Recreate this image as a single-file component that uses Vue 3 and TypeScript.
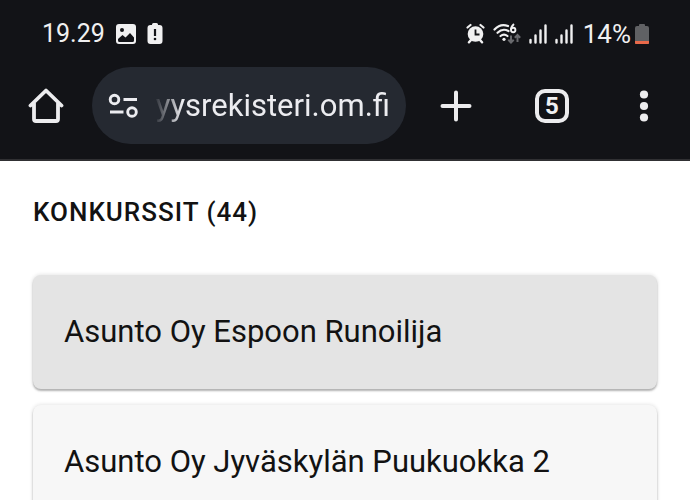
<script setup lang="ts">
import { ref } from 'vue'

interface Bankruptcy {
  name: string
  active: boolean
}

const time = '19.29'
const battery = '14%'
const tabCount = 5
const total = 44
const address = ref('myysrekisteri.om.fi')

const bankruptcies: Bankruptcy[] = [
  { name: 'Asunto Oy Espoon Runoilija', active: true },
  { name: 'Asunto Oy Jyväskylän Puukuokka 2', active: false },
]
</script>

<template>
  <div class="screen">
    <header class="chrome">
      <div class="status">
        <div class="status-left">
          <span class="clock">{{ time }}</span>
          <svg width="20" height="20" viewBox="0 0 20 20" aria-hidden="true">
            <rect width="20" height="20" rx="3" fill="#f0f0f1" />
            <circle cx="6" cy="6" r="2" fill="#121317" />
            <path d="M2 15 6.500 11 9.500 13.500 14 9l4 4.500v3q0 1.500-1.500 1.500h-13Q2 18 2 16.500Z" fill="#121317" />
          </svg>
          <svg width="16" height="22" viewBox="0 0 16 22" aria-hidden="true">
            <path d="M5 1.500Q5 0 6.500 0h3Q11 0 11 1.500V2h1.500Q15.500 2 15.500 5v13q0 3-3 3h-9q-3 0-3-3V5q0-3 3-3H5z" fill="#f0f0f1" />
            <path d="M8 6v7" stroke="#121317" stroke-width="2.200" />
            <circle cx="8" cy="16" r="1.300" fill="#121317" />
          </svg>
        </div>
        <div class="status-right">
          <svg width="20" height="21" viewBox="0 0 20 21" aria-hidden="true">
            <circle cx="10.500" cy="11" r="7.800" fill="#f0f0f1" />
            <path d="m6 17-2 2.300M15 17l2 2.300" stroke="#f0f0f1" stroke-width="2.500" stroke-linecap="round" />
            <path d="M2.500 4.500 5.500 2M15.500 2l3 2.500" stroke="#f0f0f1" stroke-width="2.200" stroke-linecap="round" />
            <path d="M10.500 6.500v5h4" fill="none" stroke="#121317" stroke-width="1.800" />
          </svg>
          <svg width="28" height="22" viewBox="0 0 28 22" aria-hidden="true">
            <g fill="none" stroke="#f0f0f1" stroke-width="2.200" stroke-linecap="round">
              <path d="M1.500 6.500Q7.500 0 15 3" />
              <path d="M4.500 9.800Q9.500 4.800 15.500 8" />
              <path d="M7.500 13Q11 10.300 14.500 13" />
            </g>
            <circle cx="11" cy="16.300" r="1.600" fill="#f0f0f1" />
            <path d="M21 1Q18 3.500 18 7" fill="none" stroke="#f0f0f1" stroke-width="1.900" />
            <circle cx="20.200" cy="7" r="2.200" fill="none" stroke="#f0f0f1" stroke-width="1.900" />
            <path d="M18 12.500v7m-2.700-2.700 2.700 2.700 2.700-2.700M24.500 19v-7M21.800 14.700l2.700-2.700 2.700 2.700" fill="none" stroke="#68696d" stroke-width="2" />
          </svg>
          <svg v-for="sim in 2" :key="sim" width="18" height="20" viewBox="0 0 18 20" aria-hidden="true">
            <path d="M1.500 18.500v-2.500M6.500 18.500v-7M11.500 18.500V6.500M16.500 18.500V1.500" stroke="#f0f0f1" stroke-width="2.400" stroke-linecap="round" />
          </svg>
          <span class="power">
            <span class="percent">{{ battery }}</span>
            <svg width="14" height="20" viewBox="0 0 14 20" aria-hidden="true">
              <path d="M4 1Q4 0 5 0h4q1 0 1 1v1h2q2 0 2 2v15q0 1-1 1H1q-1 0-1-1V4q0-2 2-2h2z" fill="#606164" />
              <path d="M0 17h14v2q0 1-1 1H1q-1 0-1-1z" fill="#e9694a" />
            </svg>
          </span>
        </div>
      </div>

      <nav class="toolbar" aria-label="Selain">
        <button class="tool home" type="button" aria-label="Koti">
          <svg width="36" height="36" viewBox="0 0 36 36" aria-hidden="true">
            <path d="M2.500 17.500 18 2.500l15.500 15M6 14.500V31q0 2 2 2h20q2 0 2-2V14.500" fill="none" stroke="#ececee" stroke-width="3.800" stroke-linejoin="round" stroke-linecap="round" />
          </svg>
        </button>
        <div class="omnibox">
          <button class="site" type="button" aria-label="Sivuston tiedot">
            <svg width="30" height="26" viewBox="0 0 30 26" fill="none" stroke="#ececf0" stroke-width="2.900" aria-hidden="true">
              <circle cx="6.500" cy="6.500" r="4.300" />
              <path d="M15.500 6.500H29M2 19h13.500" />
              <circle cx="24" cy="19" r="4.300" />
            </svg>
          </button>
          <div class="address">
            <input v-model="address" type="text" aria-label="Osoite" />
          </div>
        </div>
        <button class="tool" type="button" aria-label="Uusi välilehti">
          <svg width="32" height="32" viewBox="0 0 32 32" aria-hidden="true">
            <path d="M16 2.500v27M2.500 16h27" stroke="#ececee" stroke-width="4" stroke-linecap="round" />
          </svg>
        </button>
        <button class="tool" type="button" aria-label="Välilehdet">
          <span class="tabs">{{ tabCount }}</span>
        </button>
        <button class="tool menu" type="button" aria-label="Valikko">
          <svg width="10" height="32" viewBox="0 0 10 32" fill="#ececee" aria-hidden="true">
            <circle cx="5" cy="4.500" r="4.100" />
            <circle cx="5" cy="16" r="4.100" />
            <circle cx="5" cy="27.500" r="4.100" />
          </svg>
        </button>
      </nav>
    </header>

    <main class="content">
      <h1>KONKURSSIT ({{ total }})</h1>
      <ul>
        <li v-for="item in bankruptcies" :key="item.name">
          <button class="card" :class="{ active: item.active }" type="button">{{ item.name }}</button>
        </li>
      </ul>
    </main>
  </div>
</template>

<style>
body {
  background: #fff;
  overflow: hidden;
}
</style>

<style scoped>
.screen {
  font-family: Roboto, "Liberation Sans", sans-serif;
  color: #121212;
}

button,
input {
  margin: 0;
  padding: 0;
  border: 0;
  background: none;
  color: inherit;
  font: inherit;
}

svg {
  display: block;
  flex: none;
}

.chrome {
  background: #121317;
  border-bottom: 2px solid #303033;
  color: #f0f0f1;
}

.status {
  display: flex;
  align-items: center;
  justify-content: space-between;
  height: 67px;
  padding: 0 41px 0 42px;
  font-size: 25px;
  line-height: 32px;
}

.status-left {
  display: flex;
  align-items: center;
  gap: 11px;
}

.status-right {
  display: flex;
  align-items: center;
  gap: 8px;
}

.power {
  display: flex;
  align-items: center;
  gap: 4px;
  padding-left: 2px;
}

.percent {
  font-size: 26px;
}

.toolbar {
  display: flex;
  align-items: center;
  padding: 0 2px 15px 0;
}

.tool {
  display: flex;
  align-items: center;
  justify-content: center;
  width: 96px;
  height: 77px;
  flex: none;
}

.tool.home {
  width: 92px;
}

.tool.menu {
  width: 88px;
}

.omnibox {
  display: flex;
  align-items: center;
  flex: 1;
  min-width: 0;
  height: 77px;
  margin-right: 2px;
  padding: 0 16px;
  gap: 16px;
  border-radius: 40px;
  background: #252931;
}

.address {
  display: flex;
  justify-content: flex-end;
  flex: 1;
  min-width: 0;
  overflow: hidden;
  mask-image: linear-gradient(to right, transparent, #000 28px);
}

.address input {
  flex: none;
  width: 400px;
  height: 48px;
  text-align: right;
  font-size: 31px;
  color: #ececf0;
}

.tabs {
  display: flex;
  align-items: center;
  justify-content: center;
  box-sizing: border-box;
  width: 34px;
  height: 34px;
  border: 4px solid #ececee;
  border-radius: 10px;
  font-size: 24px;
  font-weight: 700;
  line-height: 24px;
}

.content {
  padding: 32px 33px;
}

h1 {
  margin: 0 0 44px;
  font-size: 26px;
  font-weight: 500;
  line-height: 38px;
  letter-spacing: 1px;
}

ul {
  display: grid;
  gap: 16px;
  margin: 0;
  padding: 0;
  list-style: none;
}

.card {
  display: block;
  width: 100%;
  padding: 37px 31px;
  border-radius: 8px;
  background: #f7f7f7;
  box-shadow: 0 2px 2px rgb(0 0 0 / 26%), 0 0 4px rgb(0 0 0 / 14%);
  font-size: 31px;
  line-height: 40px;
  text-align: left;
}

.card.active {
  background: #e4e4e4;
}
</style>
